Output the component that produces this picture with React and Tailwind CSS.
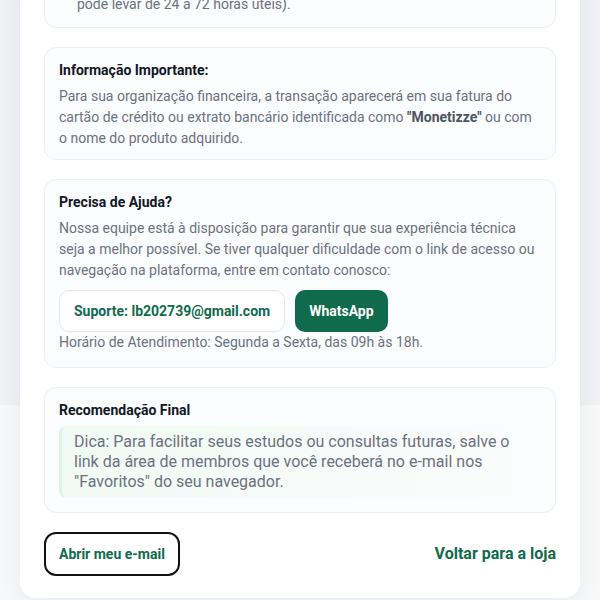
const GREEN = "text-[#0f6b4c]";
const BODY = "text-[14px] leading-[21px] text-[#6b7280]";

const InfoCard = ({ title, children, className = "pb-[14px]" }) => (
  <div
    className={`rounded-xl border border-[#eceef1] bg-[#fbfcfd] px-[14px] pt-[14px] ${className}`}
  >
    {title && (
      <h3 className="mb-2 text-[14px] font-bold leading-4 text-[#111827]">
        {title}
      </h3>
    )}
    {children}
  </div>
);

const App = () => {
  return (
    <div
      className="h-[600px] overflow-hidden bg-[linear-gradient(to_bottom,#eff1f4_0,#eff1f4_405px,#f7f8fa_405px)] px-5"
      style={{ fontFamily: "Roboto, 'Noto Sans', sans-serif" }}
    >
      <div className="-mt-[21px] rounded-b-2xl bg-white px-6 pb-[22px] shadow-[0_4px_24px_rgba(15,23,42,0.06)]">
        <div className="flex flex-col gap-[19px]">
          <div className="rounded-xl border border-[#eceef1] bg-[#fbfcfd] px-[14px] pb-3 pt-[14px]">
            <p className={`pl-[18px] ${BODY}`}>
              pode levar de 24 a 72 horas úteis).
            </p>
          </div>

          <InfoCard title="Informação Importante:" className="pb-[10px]">
            <p className={BODY}>
              Para sua organização financeira, a transação aparecerá em sua
              fatura do cartão de crédito ou extrato bancário identificada como{" "}
              <strong className="font-bold text-[#4b5563]">"Monetizze"</strong>{" "}
              ou com o nome do produto adquirido.
            </p>
          </InfoCard>

          <InfoCard title="Precisa de Ajuda?">
            <p className={BODY}>
              Nossa equipe está à disposição para garantir que sua experiência
              técnica seja a melhor possível. Se tiver qualquer dificuldade com o
              link de acesso ou navegação na plataforma, entre em contato
              conosco:
            </p>
            <div className="mt-[9px] flex items-center gap-[10px]">
              <a
                href="#"
                className={`flex h-[42px] items-center rounded-[10px] border border-[#e5e7eb] bg-white px-[14px] text-[14px] font-bold ${GREEN}`}
              >
                Suporte: lb202739@gmail.com
              </a>
              <a
                href="#"
                className="flex h-[42px] items-center rounded-[10px] bg-[#0f6b4c] px-[14px] text-[14px] font-bold text-white"
              >
                WhatsApp
              </a>
            </div>
            <p className={BODY}>
              Horário de Atendimento: Segunda a Sexta, das 09h às 18h.
            </p>
          </InfoCard>

          <InfoCard title="Recomendação Final">
            <div className="rounded-lg border-l-[3px] border-[#dcf3e5] bg-[linear-gradient(to_right,#f1faf4,#fbfcfd)] py-[6px] pl-3 pr-3">
              <p className="text-[16px] leading-5 text-[#6b7280]">
                Dica: Para facilitar seus estudos ou consultas futuras, salve o
                link da área de membros que você receberá no e-mail nos
                "Favoritos" do seu navegador.
              </p>
            </div>
          </InfoCard>

          <div className="flex items-center justify-between">
            <a
              href="#"
              className={`flex h-11 items-center rounded-xl border-2 border-[#111111] px-[13px] text-[14px] font-bold ${GREEN}`}
            >
              Abrir meu e-mail
            </a>
            <a href="#" className={`text-[16px] font-bold ${GREEN}`}>
              Voltar para a loja
            </a>
          </div>
        </div>
      </div>
    </div>
  );
};

export default App;
